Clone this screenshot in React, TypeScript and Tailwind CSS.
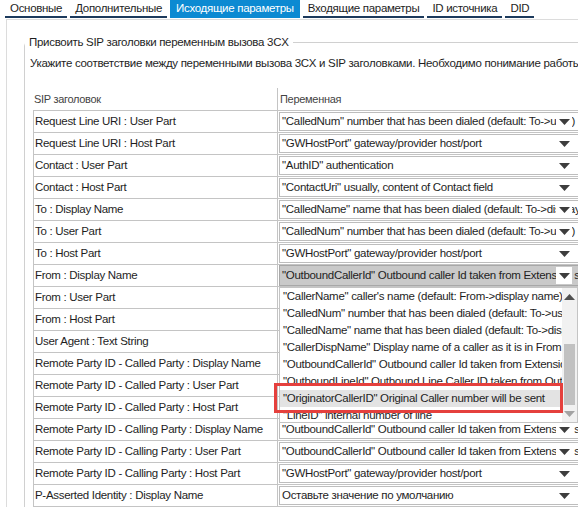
import React from "react";

const tabs = [
  { label: "Основные" },
  { label: "Дополнительные" },
  { label: "Исходящие параметры", active: true },
  { label: "Входящие параметры" },
  { label: "ID источника" },
  { label: "DID" },
];

type Row = { header: string; value: string; open?: boolean };

const rows: Row[] = [
  { header: "Request Line URI : User Part", value: '"CalledNum" number that has been dialed (default: To->user)' },
  { header: "Request Line URI : Host Part", value: '"GWHostPort" gateway/provider host/port' },
  { header: "Contact : User Part", value: '"AuthID" authentication' },
  { header: "Contact : Host Part", value: '"ContactUri" usually, content of Contact field' },
  { header: "To : Display Name", value: '"CalledName" name that has been dialed (default: To->display name)' },
  { header: "To : User Part", value: '"CalledNum" number that has been dialed (default: To->user)' },
  { header: "To : Host Part", value: '"GWHostPort" gateway/provider host/port' },
  { header: "From : Display Name", value: '"OutboundCallerId" Outbound caller Id taken from Extension settings', open: true },
  { header: "From : User Part", value: '"OutboundCallerId" Outbound caller Id taken from Extension settings' },
  { header: "From : Host Part", value: '"GWHostPort" gateway/provider host/port' },
  { header: "User Agent : Text String", value: "Оставьте значение по умолчанию" },
  { header: "Remote Party ID - Called Party : Display Name", value: '"CalledName" name that has been dialed (default: To->display name)' },
  { header: "Remote Party ID - Called Party : User Part", value: '"CalledNum" number that has been dialed (default: To->user)' },
  { header: "Remote Party ID - Called Party : Host Part", value: '"GWHostPort" gateway/provider host/port' },
  { header: "Remote Party ID - Calling Party : Display Name", value: '"OutboundCallerId" Outbound caller Id taken from Extension settings' },
  { header: "Remote Party ID - Calling Party : User Part", value: '"OutboundCallerId" Outbound caller Id taken from Extension settings' },
  { header: "Remote Party ID - Calling Party : Host Part", value: '"GWHostPort" gateway/provider host/port' },
  { header: "P-Asserted Identity : Display Name", value: "Оставьте значение по умолчанию" },
];

const options = [
  '"CallerName" caller\'s name (default: From->display name)',
  '"CalledNum" number that has been dialed (default: To->user)',
  '"CalledName" name that has been dialed (default: To->display name)',
  '"CallerDispName" Display name of a caller as it is in From',
  '"OutboundCallerId" Outbound caller Id taken from Extension settings',
  '"OutboundLineId" Outbound Line Caller ID taken from Outbound rule',
  '"OriginatorCallerID" Original Caller number will be sent',
  '"LineID" internal number of line',
];

function Caret({ up = false, color = "#3d3d3d" }: { up?: boolean; color?: string }) {
  return (
    <svg width="11" height="6" viewBox="0 0 11 6">
      <polygon points={up ? "0,6 11,6 5.5,0" : "0,0 11,0 5.5,6"} fill={color} />
    </svg>
  );
}

function Select({ value, open }: { value: string; open?: boolean }) {
  return (
    <div
      className={
        open
          ? "relative ml-[1px] h-[21px] w-[330px] overflow-hidden border border-[#a8a8a8] bg-[#c9c9c9] pl-[2px] leading-[19px] whitespace-nowrap"
          : "relative ml-[1px] mt-[1px] h-[19px] w-[330px] overflow-hidden border border-[#bdbdbd] bg-white pl-[2px] leading-[17px] whitespace-nowrap"
      }
    >
      {value}
      <span
        className={
          open
            ? "absolute left-[276px] top-[1px] flex h-[17px] w-[16px] items-center justify-center bg-white"
            : "absolute left-[276px] top-0 flex h-[17px] w-[16px] items-center justify-center bg-white"
        }
      >
        <Caret />
      </span>
    </div>
  );
}

function Dropdown() {
  return (
    <div className="absolute left-[279px] top-[287px] flex h-[136px] w-[299px] border border-[#c4c4c4] bg-white">
      <div className="w-[282px] overflow-hidden">
        {options.map((o, i) => (
          <div
            key={o}
            className={
              i === 6
                ? "h-[17px] bg-[#e3e3e3] pl-[3px] leading-[17px] whitespace-nowrap"
                : "h-[17px] pl-[3px] leading-[17px] whitespace-nowrap"
            }
          >
            {o}
          </div>
        ))}
      </div>
      <div className="flex w-[15px] flex-col bg-[#f1f1f1]">
        <div className="flex h-[17px] items-center justify-center">
          <Caret up color="#505050" />
        </div>
        <div className="flex flex-1 flex-col justify-end">
          <div className="mx-[2px] h-[61px] bg-[#c1c1c1]" />
        </div>
        <div className="flex h-[17px] items-center justify-center">
          <Caret color="#a3a3a3" />
        </div>
      </div>
    </div>
  );
}

export default function App() {
  return (
    <div className="relative h-[507px] w-[578px] overflow-hidden bg-white font-['Liberation_Sans',Arial,sans-serif] text-[11.5px] tracking-[-0.3px] text-[#1e1e1e]">
      {/* tab strip */}
      <div className="flex h-[18px] pl-[5px]">
        {tabs.map((t) => (
          <div
            key={t.label}
            className={
              t.active
                ? "mr-[3px] h-[18px] border-b-2 border-[#0c8ad2] bg-[#0c8ad2] px-[6px] leading-[16px] text-white"
                : "mr-[3px] h-[18px] border-b-2 border-[#1c3a5c] px-[5px] leading-[16px]"
            }
          >
            {t.label}
          </div>
        ))}
      </div>

      <div className="ml-[6px] mt-[1px] w-[900px] border-l border-t border-[#dcdcdc] pt-[14px]">
        <fieldset className="ml-[17px] w-[860px] rounded-tl-[4px] border border-[#d0d0d0] pb-4">
          <legend className="px-[4px] leading-[16px]">Присвоить SIP заголовки переменным вызова 3CX</legend>
          <p className="mt-[5px] pl-[5px] leading-[16px] whitespace-nowrap">
            Укажите соответствие между переменными вызова 3CX и SIP заголовками. Необходимо понимание работы протокола SIP.
          </p>

          <div className="ml-[8px] mt-[17px] w-[600px]">
            <div className="flex h-[23px] border-b border-[#c4c4c4] text-[11px] leading-[22px] text-[#444]">
              <div className="w-[244px] pl-[1px]">SIP заголовок</div>
              <div className="flex-1 border-l border-[#c4c4c4] pl-[2px]">Переменная</div>
            </div>
            {rows.map((r) => (
              <div key={r.header} className="flex h-[22px] border-b border-l border-[#c4c4c4]">
                <div className="w-[243px] pl-[1px] leading-[21px] whitespace-nowrap">{r.header}</div>
                <div className="flex-1 border-l border-[#c4c4c4]">
                  <Select value={r.value} open={r.open} />
                </div>
              </div>
            ))}
          </div>
        </fieldset>
      </div>

      <Dropdown />

      {/* callout around the chosen option */}
      <div className="absolute left-[274px] top-[383px] h-[30px] w-[289px] border-[3px] border-[#e5403d]" />
    </div>
  );
}
